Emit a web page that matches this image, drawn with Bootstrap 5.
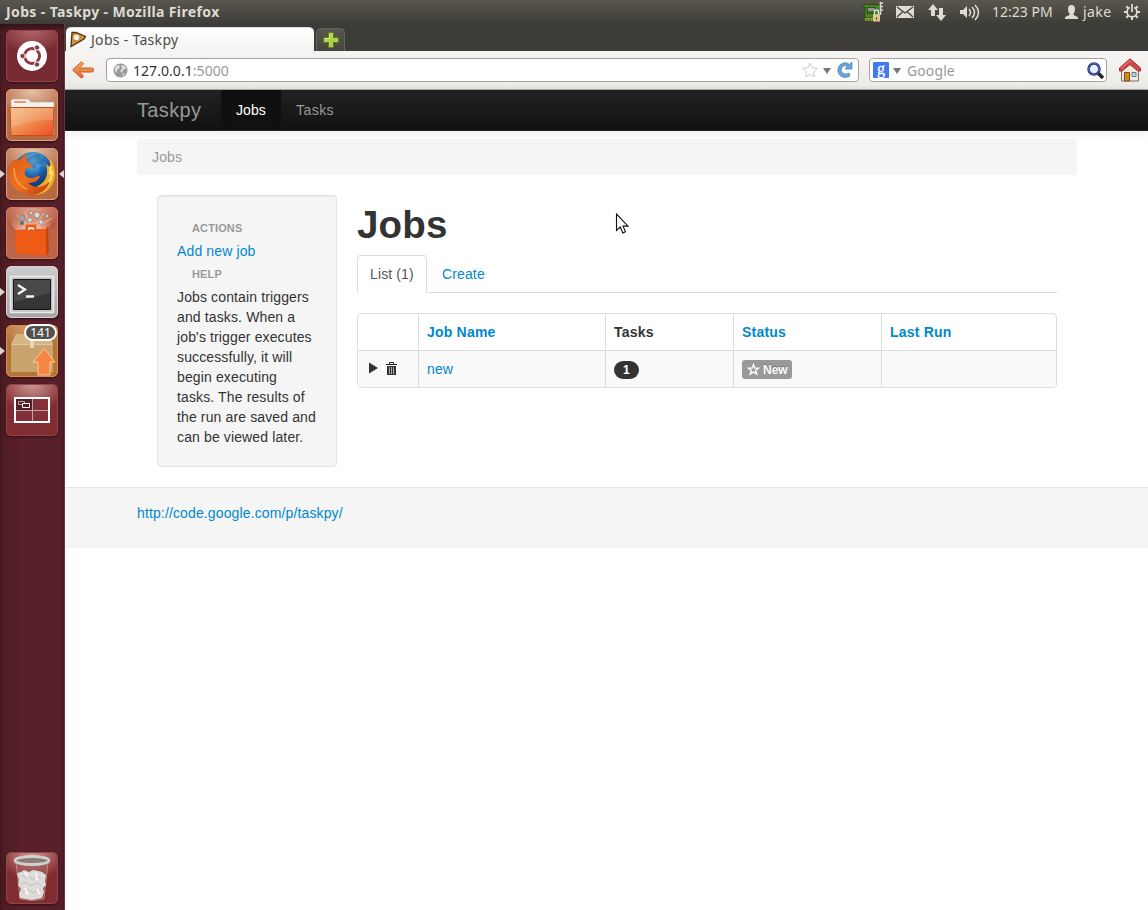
<!DOCTYPE html>
<html lang="en">
<head>
<meta charset="utf-8">
<meta name="viewport" content="width=device-width, initial-scale=1">
<title>Jobs - Taskpy</title>
<link rel="stylesheet" href="https://cdn.jsdelivr.net/npm/bootstrap@5.3.0/dist/css/bootstrap.min.css">
<style>
body{height:910px;overflow:hidden;background:#fff;color:#333;font:14px/20px "Liberation Sans",Arial,sans-serif}
svg{display:block;flex:none}
a{color:#08c;text-decoration:none}
.desk-font{font-family:"Noto Sans","Open Sans",sans-serif}
.panel{height:24px;background:linear-gradient(#59574d,#3d3c38);color:#dfdbd2;padding-left:6px;padding-right:8px;line-height:24px}
.panel-title{font-size:14px;font-weight:700;letter-spacing:.38px}
.launcher{width:65px;background:linear-gradient(90deg,#4f1c23,#5b202a 35%,#57202a);padding:6px 7px 6px 6px;gap:7px;border-right:1px solid #6d3740;box-shadow:inset 0 4px 4px #0006}
.tile{width:52px;height:52px;border-radius:5px;border:1px solid #b3716a;box-shadow:0 1px 3px #0008}
.tile-orange{border-color:#dba37d;background:radial-gradient(36px 26px at 50% 0,#e6c3ab 0,#bd7450 90%,#b96a43 100%)}
.tile-red{border-color:#d37b61;background:radial-gradient(36px 26px at 50% 0,#dfa48f 0,#b65840 90%,#bc6448 100%)}
.tile-gray{border-color:#d5d2d3;background:linear-gradient(#cfcccd,#a8a3a6)}
.tile-gold{border-color:#d6914f;background:radial-gradient(36px 26px at 50% 0,#d8a574 0,#b5753c 90%,#b6743a 100%)}
.tile-dark{border-color:#94464a;background:radial-gradient(36px 26px at 50% 0,#c99793 0,#8b3538 90%,#802d31 100%)}
.tile-home{background:radial-gradient(36px 22px at 50% 0,#ad6669,#803038 90%,#762a31)}
.pip{width:5px;height:8px;top:21px;background:#dcd4d5}
.pip-l{left:-7px;clip-path:polygon(0 0,100% 50%,0 100%)}
.pip-r{right:-7px;clip-path:polygon(100% 0,0 50%,100% 100%)}
.count{left:17px;top:-2px;width:33px;height:17px;border:2px solid #fff;border-radius:9px;background:#54504f;color:#fff;font-size:12px;line-height:13px;text-align:center}
.tabstrip{height:27px;background:#3c3b37;padding:3px 0 0 1px;gap:2px}
.tab-on{width:248px;height:24px;border-radius:5px 5px 0 0;background:linear-gradient(#fff,#f3f2f1);color:#4b4b4b;font-size:14px;line-height:25px;padding-left:4px;border-top:1px solid #ddd}
.tab-add{width:29px;height:23px;border:1px solid #63625d;border-bottom:0;border-radius:5px 5px 0 0;background:linear-gradient(#57564f,#454440)}
.toolbar{height:39px;padding:7px 7px 0 7px;background:linear-gradient(#f5f4f2,#edebe8);border-bottom:1px solid #a9aaa2}
.field{height:24px;border:1px solid #a5a39f;border-radius:4px;background:#fff;font-size:14px;color:#333}
.field>span{padding-top:2px}
.url{width:753px;margin-left:12px;padding:0 5px 0 6px}
.search{width:238px;margin-left:10px;padding:0 2px 0 3px}
.g-box{width:16px;height:16px;background:#4279ef;border-radius:1px;overflow:visible}
.pale{color:#999}
.webpage{letter-spacing:.13px}
.site-nav{height:41px;background:linear-gradient(#222,#111);border-bottom:1px solid #252525;box-shadow:0 1px 10px rgba(0,0,0,.1);padding:0 0 0 72px;line-height:40px;color:#999;position:relative}
.site-nav a{color:#999;padding:0 15px}
.site-nav .site-brand{font-size:20px;padding:0 20px 0 0;width:84px;letter-spacing:.35px}
.site-nav .on{background:#111;color:#fff;width:60px;letter-spacing:.1px;box-shadow:inset 0 3px 8px rgba(0,0,0,.125)}
.site-nav a:last-child{letter-spacing:.45px}
.page{width:940px;margin-left:72px}
.crumbs{height:36px;margin-top:8px;padding:8px 15px;background:#f5f5f5;border-radius:4px;color:#999}
.side{width:180px;height:272px;margin-left:20px;padding:19px;background:#f5f5f5;border:1px solid #e3e3e3;border-radius:4px;box-shadow:inset 0 1px 1px rgba(0,0,0,.05)}
.side-text{white-space:nowrap}
.nav-head{font-size:11px;font-weight:700;color:#999;padding:3px 15px;text-shadow:0 1px 0 rgba(255,255,255,.5);text-transform:uppercase}
.main{width:700px;margin-left:20px}
.main h1{font-size:38.5px;line-height:40px;font-weight:700;margin:10px 0;letter-spacing:.15px}
.main .nav-tabs{border-bottom:1px solid #ddd;height:38px;margin-bottom:20px}
.main .nav-tabs .nav-link{height:38px;margin:0 2px 0 0;padding:8px 12px;border-radius:4px 4px 0 0;color:#08c;line-height:20px}
.main .nav-tabs .nav-link.active{width:70px;white-space:nowrap;color:#555;background:#fff;border-color:#ddd #ddd #fff}
.frame{height:75px;border:1px solid #ddd;border-radius:4px;overflow:hidden}
.jobs{table-layout:fixed;width:698px;margin:0;color:#333}
.jobs th,.jobs td{height:36px;padding:8px;line-height:20px;border-left:1px solid #ddd;border-bottom:0}
.jobs th{letter-spacing:.2px}
.jobs th:first-child,.jobs td:first-child{border-left:0}
.jobs tbody td{height:37px;padding:8px 8px 7px;border-top:1px solid #ddd;background:#f9f9f9;vertical-align:top}
.jobs th+th,.jobs td+td{padding-left:8.500px}
.row-tools{height:18px;padding-left:3px;gap:8px}
.pill{display:block;width:25px;height:18px;border-radius:9px;background:#333;color:#fff;font-size:12px;font-weight:700;line-height:18px;text-align:center;margin-top:2px}
.tag-new{width:50px;height:19px;border-radius:3px;background:#999;color:#fff;font-size:12px;font-weight:700;line-height:19px;padding-left:5px;gap:3px;margin-top:1px;letter-spacing:0;text-shadow:0 -1px 0 rgba(0,0,0,.25)}
.tag-new span{padding-top:1px}
.foot{height:61px;margin-top:20px;padding:15px 72px;background:#f5f5f5;border-top:1px solid #e5e5e5}
.pointer-arrow{left:615px;top:213px}
</style>
</head>
<body class="d-flex flex-column">
<header class="panel desk-font d-flex align-items-center flex-shrink-0">
  <span class="panel-title">Jobs - Taskpy - Mozilla Firefox</span>
  <svg class="ms-auto" width="22" height="22" viewBox="0 0 22 22"><path d="M.5 3.500H18V17H3V6H.5z" fill="#4c8226" stroke="#254d16"/><path d="M3 17h14v3H3z" fill="#8ba423"/><path d="M5 18v2M8 18v2M11 18v2" stroke="#33571a"/><path d="M5.500 6.500h8v6h-8z" fill="#3b6c20" stroke="#2b5418"/><path d="M6 7h7v3H6z" fill="#8d938f"/><path d="M18.500 1v13M18 2h3M18 5.500h3M18 9h3" stroke="#d7d8d2" stroke-width="1.600"/><path d="M12.500 14v-3a2 2 0 014 0v3" fill="none" stroke="#ddd" stroke-width="1.500"/><path d="M11 13.500h7v7h-7z" fill="#e1c69b"/><path d="M14 16h1v3h-1z" fill="#7a4c18"/></svg>
  <svg style="margin-left:12px" width="18" height="12" viewBox="0 0 18 12"><path d="M0 0h18v12H0z" fill="#dfdbd2"/><path d="M1 1l8 6 8-6M1 11l5.500-5M17 11l-5.500-5" fill="none" stroke="#45433d" stroke-width="1.300"/></svg>
  <svg style="margin-left:14px" width="18" height="17" viewBox="0 0 18 17"><path d="M5 0l5 6H7v6H3V6H0zM13 17l-5-6h3V4h4v7h3z" fill="#dfdbd2"/></svg>
  <svg style="margin-left:14px" width="21" height="17" viewBox="0 0 21 17"><path d="M0 6h3l4-4v12l-4-4H0z" fill="#dfdbd2"/><path d="M9 5q3 3.500 0 7M12 3q5 5.500 0 11M15 1q7 7.500 0 15" fill="none" stroke="#dfdbd2" stroke-width="1.500"/></svg>
  <span class="text-nowrap" style="margin-left:11px;width:61px;font-size:14px">12:23 PM</span>
  <svg style="margin-left:12px" width="13" height="14" viewBox="0 0 13 14"><path d="M6.500 0C9 0 10 1.500 10 4c0 2-.5 3.500-1.500 4.500V10c1 1 4.500 1 4.500 3v1H0v-1c0-2 3.500-2 4.500-3V8.500C3.500 7.500 3 6 3 4c0-2.500 1-4 3.500-4z" fill="#dfdbd2"/></svg>
  <span style="margin-left:5px;width:41px;font-size:14px;letter-spacing:.4px">jake</span>
  <svg width="16" height="16" viewBox="0 0 16 16"><circle cx="8" cy="8" r="4.900" fill="none" stroke="#dfdbd2" stroke-width="1.700"/><path d="M13 8h3M0 8h3M11.500 11.500l2.200 2.200M4.500 11.500l-2.200 2.200M8 13v3M11.500 4.500l2.200-2.200M4.500 4.500L2.300 2.300" stroke="#dfdbd2" stroke-width="2"/><path d="M6 0h4v7H6z" fill="#4a4840"/><path d="M8 0v8" stroke="#dfdbd2" stroke-width="1.800"/></svg>
</header>

<div class="d-flex flex-grow-1">
<aside class="launcher d-flex flex-column flex-shrink-0">
  <div class="tile tile-dark tile-home"><svg width="50" height="50" viewBox="0 0 50 50"><circle cx="25" cy="25" r="15" fill="#fff"/><circle cx="25" cy="25" r="7.500" fill="none" stroke="#8d3a40" stroke-width="3"/><path d="M25 25H13M25 25l6-10.400M25 25l6 10.400" stroke="#fff" stroke-width="1.400"/><circle cx="25" cy="25" r="5.800" fill="#fff"/><g fill="#8d3a40" stroke="#fff"><circle cx="15.500" cy="25" r="2.700"/><circle cx="30" cy="16.500" r="2.700"/><circle cx="30" cy="33.500" r="2.700"/></g></svg></div>
  <div class="tile tile-orange"><svg width="50" height="50" viewBox="0 0 50 50"><defs><linearGradient id="fo" x2="1" y2="1"><stop stop-color="#f3bd81"/><stop offset=".5" stop-color="#ef8b4e"/><stop offset="1" stop-color="#ee4d1e"/></linearGradient></defs><path d="M4 45V10l2-1h15l3 3h23v33z" fill="#f4f1ee" stroke="#b7aaa1" stroke-width=".6"/><path d="M7 11h12v2H7z" fill="#f29868"/><path d="M3 17.500h44l-1 28H4z" fill="url(#fo)" stroke="#c74c1a"/><path d="M4 18h42v12Q24 29 4 38z" fill="#fff" opacity=".16"/></svg></div>
  <div class="tile tile-orange position-relative"><i class="pip pip-l position-absolute"></i><i class="pip pip-r position-absolute"></i>
    <svg width="50" height="50" viewBox="0 0 50 50"><defs><radialGradient id="gl" cx=".5" cy=".25"><stop stop-color="#83ccef"/><stop offset=".6" stop-color="#2b7cc0"/><stop offset="1" stop-color="#123f83"/></radialGradient><linearGradient id="fx" x2="1" y2="1"><stop stop-color="#d95a13"/><stop offset=".5" stop-color="#ef7220"/><stop offset="1" stop-color="#bd370b"/></linearGradient></defs><circle cx="26" cy="22" r="19" fill="url(#gl)"/><path d="M24 7l7-2 3 4 4 2-3 5-5-1-2 5-6-3-4-6zM33 17l6 2 2 8-5 6-5-5z" fill="#194f8e" opacity=".4"/><path d="M43 9l0 9-4-3c3 10 0 18-8 22l-12 7c14 6 28-3 29-18 0-7-2-12-5-17z" fill="#efae2a"/><path d="M44 17l-1 7 2-1c0 8-5 15-12 18" fill="none" stroke="#fde16a" stroke-width="2.200"/><path d="M5 12c2-1 5-2 8-1 2-3 4-5 7-5l0 7c3 2 6 3 5 5l-6 2c-3 4-1 8 4 9 5 0 6-2 10-2-1 5-6 7-12 7 7 6 15 5 22-2-4 12-16 17-27 12C4 40-2 27 5 12z" fill="url(#fx)"/><path d="M7 19c0 9 3 17 13 21" fill="none" stroke="#fba84b" stroke-width="2" opacity=".65"/></svg></div>
  <div class="tile tile-red"><svg width="50" height="50" viewBox="0 0 50 50"><defs><radialGradient id="glow" cx=".5" cy=".9" r=".75"><stop stop-color="#fff3e8"/><stop offset=".4" stop-color="#f8c4a6" stop-opacity=".7"/><stop offset="1" stop-color="#e8a287" stop-opacity="0"/></radialGradient></defs><ellipse cx="24" cy="14" rx="20" ry="12" fill="url(#glow)"/><path d="M25 22L10 7M25 22L18 4M25 22L37 5M25 22L45 10" stroke="#fff0e5" stroke-width="1.200" opacity=".4"/><g fill="#d9ddda" stroke="#8d8785" stroke-width=".8"><circle cx="15" cy="10" r="2.500" fill="#92b1b9"/><circle cx="24" cy="5" r="1.600"/><circle cx="30" cy="7" r="3"/><circle cx="40" cy="8" r="1.600"/><circle cx="23" cy="12" r="2.300"/><circle cx="34" cy="14" r="2.300"/><circle cx="15" cy="15" r="2" fill="#48738b"/></g><path d="M8 22l31-1 2-3 1 26-3 4-30-3z" fill="#c9440d"/><path d="M8 22l31-1 0 27-30-3z" fill="#ed5b17"/><path d="M20 24v-6h8v6" fill="none" stroke="#ed5b17" stroke-width="3"/><path d="M21.500 22v-2h5v2" fill="none" stroke="#fff"/></svg></div>
  <div class="tile tile-gray position-relative"><i class="pip pip-l position-absolute"></i><svg width="50" height="50" viewBox="0 0 50 50"><path d="M3.500 9.500h43v36h-43z" fill="#c5c2c3" stroke="#ecebeb" stroke-width="1.500"/><path d="M6.500 12.500h37v30h-37z" fill="#343536" stroke="#161616"/><path d="M7 13h36v13L7 35z" fill="#fff" opacity=".10"/><path d="M11 18l7 4.500-7 4.500M19 29.500h8" fill="none" stroke="#f4f4f4" stroke-width="2.300"/></svg></div>
  <div class="tile tile-gold position-relative"><i class="pip pip-l position-absolute"></i><svg width="50" height="50" viewBox="0 0 50 50"><path d="M9 8h33l4 10H4z" fill="#d4b584"/><path d="M4 18h42v28H4z" fill="#c9a46d"/><path d="M5 18.500h40" stroke="#e1c79e"/><path d="M23 12h4v10h-4z" fill="#ead7b9"/><path d="M37.500 22.500L48 36h-5v13H31V36h-5z" fill="#f58643" stroke="#ffc69d"/></svg><span class="count desk-font position-absolute">141</span></div>
  <div class="tile tile-dark"><svg width="50" height="50" viewBox="0 0 50 50"><path d="M8 13h34v24H8z" fill="#853039" stroke="#fff" stroke-width="2"/><path d="M9 14h16v11H9z" fill="#552128"/><path d="M25.500 14v22M9 25.500h32" stroke="#bba6a7"/><path d="M11.500 16.500h6v3h-6z" fill="none" stroke="#aaa"/><path d="M15.500 18.500h7v4h-7z" fill="#552128" stroke="#fff"/></svg></div>
  <div class="tile tile-dark mt-auto"><svg width="50" height="50" viewBox="0 0 50 50"><path d="M9 9h32l-4 37q-12 3-24 0z" fill="#a4605f" opacity=".6" stroke="#d5b4b2"/><path d="M10 20l4-1 3-2 5 2 4-2 5 1 4 1 4 3-1 6 1 4-3 3 1 4-2 6-10 2-12-2-1-4 2-5-3-4 1-5z" fill="#dddcd8"/><path d="M15 22l4 3 4-2 2 4 5-4 4 2M14 31l4-2 5 4 7-3 4 2M15 40l5-4 6 4 8-3" fill="none" stroke="#b9b6b0" stroke-width=".8"/><path d="M18 19l3 5M29 20l1 7M18 35l3 7M30 36l3 5" stroke="#f8f8f6" stroke-width="2"/><ellipse cx="25" cy="7.500" rx="17" ry="4" fill="#8a7b76" stroke="#d0d1cc" stroke-width="2.800"/></svg></div>
</aside>

<div class="flex-grow-1">
  <div class="tabstrip d-flex align-items-end">
    <div class="tab-on desk-font d-flex align-items-center"><svg width="17" height="17" viewBox="0 0 17 17"><path d="M2 1.500h4L15.500 5.500 14 8 1 15.500z" fill="#d8952f" stroke="#47321b" stroke-width="1.300"/><path d="M4 4l8 2-8 6z" fill="#c87d4c"/><circle cx="6.500" cy="6.500" r="2.800" fill="#f3ede4"/></svg><span class="text-nowrap" style="margin-left:4px;letter-spacing:.3px">Jobs - Taskpy</span></div>
    <div class="tab-add d-flex justify-content-center align-items-center"><svg width="16" height="16" viewBox="0 0 16 16"><path d="M5.500.5h5v5h5v5h-5v5h-5v-5h-5v-5h5z" fill="#afd04b" stroke="#587e22"/><path d="M6.500 2v4.500H2M7 2h2.500" stroke="#d8eb86" fill="none"/></svg></div>
  </div>
  <div class="toolbar desk-font d-flex">
    <svg style="margin-top:3px" width="22" height="18" viewBox="0 0 22 18"><defs><linearGradient id="bk" x2="0" y2="1"><stop stop-color="#f7ad67"/><stop offset="1" stop-color="#e0682a"/></linearGradient></defs><path d="M9.500.8l2 2.200-4.200 4H20q1.500 0 1.500 2T20 11H7.300l4.200 4-2 2.200L1 9.500v-1z" fill="url(#bk)" stroke="#cf5a24" stroke-linejoin="round"/></svg>
    <div class="field url d-flex align-items-center"><svg width="15" height="15" viewBox="0 0 15 15"><circle cx="7.500" cy="7.500" r="7" fill="#999"/><path d="M2 4l3-2 2 1-1 3-2 1v3l-2-2zM8 2l4 1 1 3-3 1-1 3-2-2 2-2zM9 11l3-1-2 3z" fill="#ddd"/></svg><span style="margin-left:5px;letter-spacing:.05px">127.0.0.1<i class="pale fst-normal">:5000</i></span>
      <svg class="ms-auto" width="16" height="16" viewBox="0 0 16 16"><path d="M8 1l2.200 4.700 5.100.6-3.800 3.500 1 5.100L8 12.400l-4.500 2.500 1-5.100L.7 6.300l5.100-.6z" fill="#fff" stroke="#ccc"/></svg>
      <svg style="margin-left:5px;margin-top:2px" width="8" height="6" viewBox="0 0 8 6"><path d="M0 0h8L4 6z" fill="#777"/></svg>
      <svg style="margin-left:6px" width="16" height="16" viewBox="0 0 16 16"><path d="M15 0v7H8l2.500-2.500C7 2.500 4 5 4.500 8.500S9 13 12 11l1 3C6 18 0 13 1 7 2 1 9-1 12.500 2.500z" fill="#6aa5da" stroke="#4480bb" stroke-width=".7"/></svg>
    </div>
    <div class="field search d-flex align-items-center"><svg class="g-box" width="16" height="16" viewBox="0 0 16 16"><text x="4" y="11.500" font-family="Liberation Serif,serif" font-size="16" fill="#fff" stroke="#fff" stroke-width=".3">g</text></svg><svg style="margin-left:4px;margin-top:2px" width="8" height="6" viewBox="0 0 8 6"><path d="M0 0h8L4 6z" fill="#777"/></svg><span class="pale" style="margin-left:6px;letter-spacing:.1px">Google</span>
      <svg class="ms-auto" width="17" height="17" viewBox="0 0 17 17"><path d="M11 11l5 5" stroke="#222" stroke-width="3.500"/><circle cx="7" cy="7" r="5.500" fill="#e7eefb" stroke="#24317d" stroke-width="2.500"/><circle cx="7" cy="7" r="5.500" fill="none" stroke="#6f81cd" stroke-width=".7"/></svg></div>
    <svg class="ms-auto" width="22" height="24" viewBox="0 0 22 24"><path d="M2.500 11L11 4l8.500 7v12h-17z" fill="#eee9dd" stroke="#77736b"/><path d="M5.500 14.500h5V23h-5z" fill="#d18a1b" stroke="#7d4b0b"/><path d="M13 14.500h4v4h-4z" fill="#b8d8e4" stroke="#627e88"/><path d="M11 .8L21.500 10v3H19l-8-6.500L3 13H.5v-3z" fill="#d04c4c" stroke="#a72b2d"/><path d="M11 2.300L2 10.300" stroke="#ed8880"/></svg>
  </div>

  <div class="webpage">
  <nav class="site-nav d-flex">
    <a class="site-brand" href="#">Taskpy</a><a class="on" href="#">Jobs</a><a href="#">Tasks</a>
  </nav>
  <div class="page">
    <div class="crumbs">Jobs</div>
    <div class="d-flex" style="margin-top:20px">
      <div class="side">
        <div class="nav-head">Actions</div>
        <a href="#">Add new job</a>
        <div class="nav-head">Help</div>
        <div class="side-text">Jobs contain triggers<br>and tasks. When a<br>job's trigger executes<br>successfully, it will<br>begin executing<br>tasks. The results of<br>the run are saved and<br>can be viewed later.</div>
      </div>
      <main class="main">
        <h1>Jobs</h1>
        <ul class="nav nav-tabs"><li class="nav-item"><a class="nav-link active" href="#">List (1)</a></li><li class="nav-item"><a class="nav-link" href="#">Create</a></li></ul>
        <div class="frame">
        <table class="jobs">
          <colgroup><col style="width:60px"><col style="width:187px"><col style="width:128px"><col style="width:148px"><col></colgroup>
          <thead><tr><th></th><th><a href="#">Job Name</a></th><th>Tasks</th><th><a href="#">Status</a></th><th><a href="#">Last Run</a></th></tr></thead>
          <tbody><tr>
            <td><div class="row-tools d-flex align-items-center"><svg width="9" height="12" viewBox="0 0 9 12"><path d="M0 .5L9 6 0 11.500z" fill="#333"/></svg><svg width="11" height="13" viewBox="0 0 11 13"><path d="M3.500 2V.5h4V2M0 2.500h11" fill="none" stroke="#222"/><path d="M1 4h9v9H1z" fill="#333"/><path d="M3.500 5v7M5.500 5v7M7.500 5v7" stroke="#aaa"/></svg></div></td>
            <td><a href="#">new</a></td>
            <td><span class="pill">1</span></td>
            <td><div class="tag-new d-flex align-items-center"><svg width="13" height="13" viewBox="0 0 13 13"><path d="M6.500 1.500l1.300 3.600h4L8.600 7.400l1.200 3.800-3.300-2.300-3.300 2.300 1.200-3.800L1.200 5.100h4z" fill="none" stroke="#fff" stroke-width="1.300"/></svg><span>New</span></div></td>
            <td></td>
          </tr></tbody>
        </table>
        </div>
      </main>
    </div>
  </div>
  <footer class="foot"><a href="#">http://code.google.com/p/taskpy/</a></footer>
  </div>
</div>
</div>
<svg class="pointer-arrow position-absolute" width="15" height="22" viewBox="0 0 15 22"><path d="M1.500 1v16.500l3.700-3.500 2.600 6 2.700-1.200-2.500-5.700h5z" fill="#fff" stroke="#111" stroke-width="1.100"/></svg>
<script src="https://cdn.jsdelivr.net/npm/bootstrap@5.3.0/dist/js/bootstrap.bundle.min.js"></script>
</body>
</html>
